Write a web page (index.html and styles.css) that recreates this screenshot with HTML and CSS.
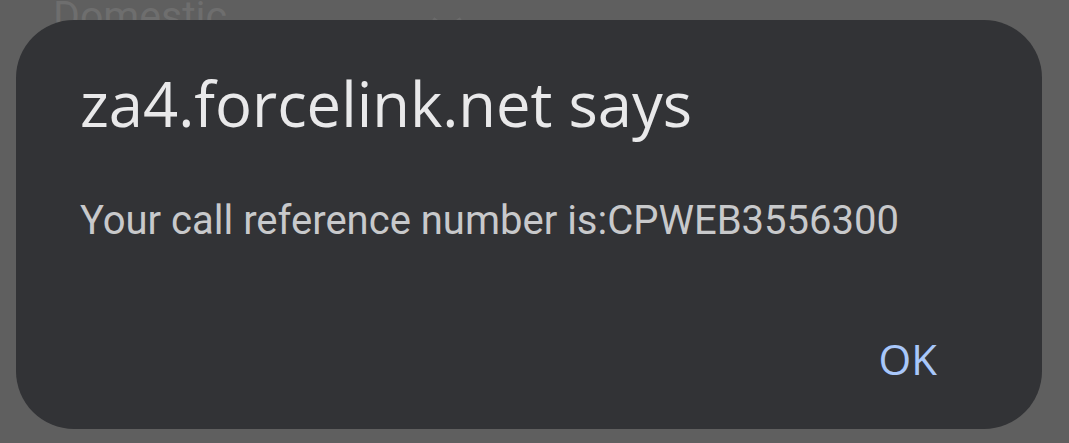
FILE: index.html
```html
<!DOCTYPE html>
<html>
<head>
<meta charset="utf-8">
<link rel="stylesheet" href="styles.css">
</head>
<body>
<div class="page">
  <div class="select">
    <span class="select-label">Domestic</span>
    <svg class="chev" width="40" height="20" viewBox="0 0 40 20"><path d="M6 6 L20 16 L34 6" fill="none" stroke="#6a6a6a" stroke-width="4"/></svg>
  </div>
</div>
<div class="dialog" role="dialog">
  <h1 class="title">za4.forcelink.net says</h1>
  <p class="message">Your call reference number is:CPWEB3556300</p>
  <div class="actions"><button class="ok">OK</button></div>
</div>
</body>
</html>
```

FILE: styles.css
```css
html, body { margin: 0; padding: 0; }
body {
  width: 1069px;
  height: 443px;
  background: #5f5f5f;
  overflow: hidden;
  font-family: Roboto, "Liberation Sans", sans-serif;
}
.page { padding: 0 0 0 53px; }
.select {
  display: flex;
  align-items: center;
  gap: 200px;
  width: 420px;
  height: 40px;
  margin-top: -4px;
}
.select-label { font-size: 41px; line-height: 40px; color: #6e6e6e; }
.chev { margin-top: 14px; }
.dialog {
  position: fixed;
  left: 16px;
  top: 20px;
  width: 1026px;
  height: 409px;
  box-sizing: border-box;
  background: #323336;
  border-radius: 58px;
  padding: 53px 64px 0 64px;
  display: flex;
  flex-direction: column;
}
.title {
  margin: 0;
  font-family: "Open Sans", sans-serif;
  font-weight: 400;
  font-size: 61.5px;
  line-height: 1;
  color: #e9e9ea;
}
.message {
  margin: 66px 0 0 0;
  font-size: 40px;
  line-height: 1;
  color: #c8c9cb;
  white-space: nowrap;
}
.actions {
  display: flex;
  justify-content: flex-end;
  margin-top: 97px;
  padding-right: 41px;
}
.ok {
  background: none;
  border: 0;
  padding: 0;
  font-family: "Open Sans", sans-serif;
  font-size: 42px;
  line-height: 1;
  font-weight: 500;
  color: #a8c7fa;
}
```
